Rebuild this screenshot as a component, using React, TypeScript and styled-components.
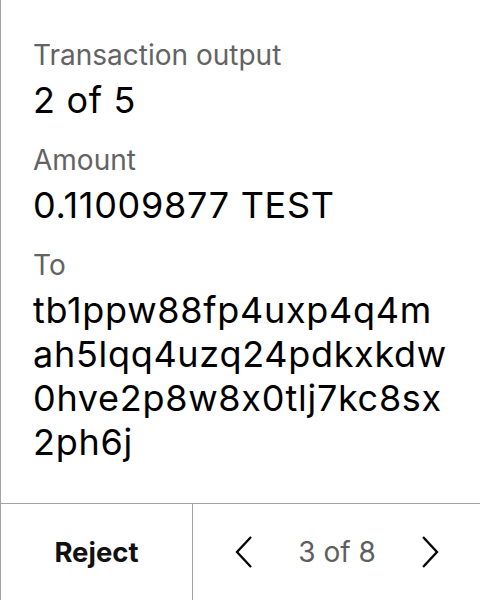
import React from "react";
import styled, { createGlobalStyle } from "styled-components";

const Global = createGlobalStyle`
  html, body { margin: 0; padding: 0; background: #fff; }
  body {
    font-family: Inter, "Noto Sans", sans-serif;
    font-feature-settings: "calt" 0;
  }
`;

const Screen = styled.div`
  width: 480px;
  height: 600px;
  display: flex;
  flex-direction: column;
  box-sizing: border-box;
  border-left: 1px solid #a4a4a4;
  background: #fff;
`;

const Body = styled.div`
  flex: 1;
  display: flex;
  flex-direction: column;
  gap: 21px;
  padding: 38px 32px 0 32px;
`;

const Field = styled.div`
  display: flex;
  flex-direction: column;
  gap: 6px;
`;

const Label = styled.div`
  font-size: 28px;
  line-height: 34px;
  color: #636363;
`;

const Value = styled.div`
  font-size: 36px;
  line-height: 44px;
  letter-spacing: 0.7px;
  color: #000;
  word-break: break-all;
  font-feature-settings: "calt" 0;
`;

const Footer = styled.div`
  height: 96px;
  display: flex;
  border-top: 1px solid #a4a4a4;
`;

const RejectButton = styled.button`
  width: 192px;
  border: none;
  border-right: 1px solid #a4a4a4;
  background: transparent;
  font-family: Inter, sans-serif;
  font-weight: 700;
  font-size: 27.5px;
  color: #111;
  padding: 0;
`;

const Pager = styled.div`
  flex: 1;
  display: flex;
  align-items: center;
  justify-content: space-between;
  padding: 0 41px 0 42px;
`;

const Chevron = styled.button`
  border: none;
  background: transparent;
  padding: 0;
  display: flex;
`;

const PageText = styled.span`
  font-size: 28px;
  color: #5e5e5e;
`;

const address = "tb1ppw88fp4uxp4q4mah5lqq4uzq24pdkxkdw0hve2p8w8x0tlj7kc8sx2ph6j";

export default function App() {
  return (
    <Screen>
      <Global />
      <Body>
        <Field>
          <Label>Transaction output</Label>
          <Value>2 of 5</Value>
        </Field>
        <Field>
          <Label>Amount</Label>
          <Value>0.11009877 TEST</Value>
        </Field>
        <Field>
          <Label>To</Label>
          <Value>{address}</Value>
        </Field>
      </Body>
      <Footer>
        <RejectButton>Reject</RejectButton>
        <Pager>
          <Chevron>
            <svg width="18" height="32" viewBox="0 0 18 32" fill="none">
              <path d="M16 1 L2 16 L16 31" stroke="#000" strokeWidth="2.3" />
            </svg>
          </Chevron>
          <PageText>3 of 8</PageText>
          <Chevron>
            <svg width="18" height="32" viewBox="0 0 18 32" fill="none">
              <path d="M2 1 L16 16 L2 31" stroke="#000" strokeWidth="2.3" />
            </svg>
          </Chevron>
        </Pager>
      </Footer>
    </Screen>
  );
}
